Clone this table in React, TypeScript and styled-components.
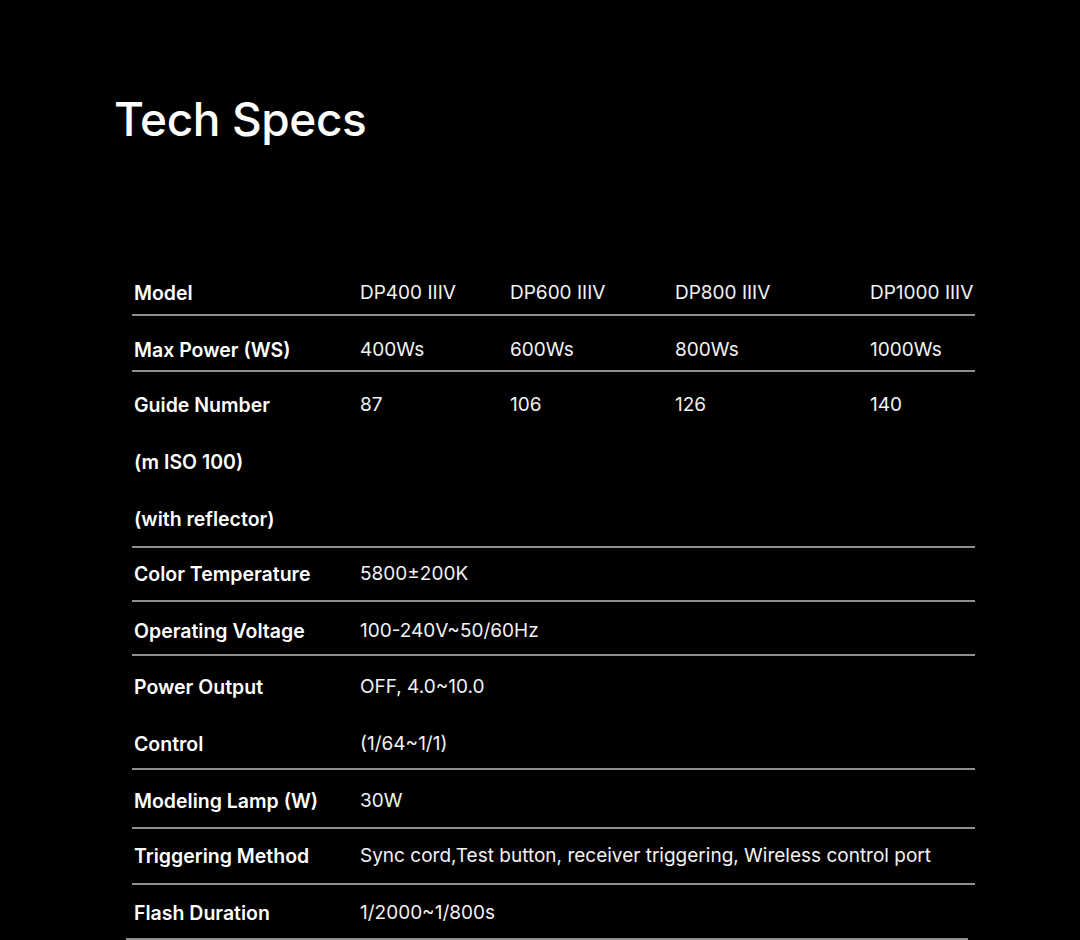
import React from 'react';
import { createGlobalStyle, styled } from 'styled-components';

const GlobalStyle = createGlobalStyle`
	html, body {
		margin: 0;
		padding: 0;
		background: #000;
	}
	body {
		font-family: Inter, 'Noto Sans', sans-serif;
		color: #fff;
	}
`;

type Row = {
	label: string[];
	values: string[][];
	pt: number;
	pb: number;
	span?: boolean;
};

const rows: Row[] = [
	{ label: ['Model'], values: [['DP400 IIIV'], ['DP600 IIIV'], ['DP800 IIIV'], ['DP1000 IIIV']], pt: 15, pb: 7 },
	{ label: ['Max Power (WS)'], values: [['400Ws'], ['600Ws'], ['800Ws'], ['1000Ws']], pt: 20, pb: 6 },
	{ label: ['Guide Number', '(m ISO 100)', '(with reflector)'], values: [['87'], ['106'], ['126'], ['140']], pt: 19, pb: 13 },
	{ label: ['Color Temperature'], values: [['5800±200K']], pt: 12, pb: 12, span: true },
	{ label: ['Operating Voltage'], values: [['100-240V~50/60Hz']], pt: 15, pb: 9, span: true },
	{ label: ['Power Output', 'Control'], values: [['OFF, 4.0~10.0', '(1/64~1/1)']], pt: 17, pb: 10, span: true },
	{ label: ['Modeling Lamp (W)'], values: [['30W']], pt: 17, pb: 12, span: true },
	{
		label: ['Triggering Method'],
		values: [['Sync cord,Test button, receiver triggering, Wireless control port']],
		pt: 13,
		pb: 13,
		span: true,
	},
	{ label: ['Flash Duration'], values: [['1/2000~1/800s']], pt: 14, pb: 11, span: true },
];

const App: React.FunctionComponent = () => {
	return (
		<Page>
			<GlobalStyle />
			<Title>Tech Specs</Title>
			<Table>
				{rows.map((row, i) => (
					<SpecRow key={row.label[0]} $pt={row.pt} $pb={row.pb} $last={i === rows.length - 1}>
						<Label>
							{row.label.map((l) => (
								<Line key={l}>{l}</Line>
							))}
						</Label>
						{row.values.map((v, j) => (
							<Value key={j} $span={row.span}>
								{v.map((t) => (
									<Line key={t}>{t}</Line>
								))}
							</Value>
						))}
					</SpecRow>
				))}
			</Table>
		</Page>
	);
};

const Page = styled.div`
	width: 1080px;
	height: 940px;
	overflow: hidden;
	padding-top: 91px;
	box-sizing: border-box;
`;
const Title = styled.h1`
	margin: 0 0 0 114px;
	font-size: 46px;
	line-height: 56px;
	font-weight: 500;
	letter-spacing: -0.4px;
	color: #fff;
`;
const Table = styled.div`
	margin: 117px 0 0 132px;
	width: 843px;
`;
const SpecRow = styled.div<{ $pt: number; $pb: number; $last: boolean }>`
	display: grid;
	grid-template-columns: 228px 150px 165px 195px 105px;
	padding: ${(p) => p.$pt}px 0 ${(p) => p.$pb}px;
	border-bottom: 2px solid #8e8e8e;
	${(p) => (p.$last ? 'box-sizing: border-box; margin-left: -6px; padding-left: 6px; width: 842px;' : '')}
`;
const Cell = styled.div`
	display: flex;
	flex-direction: column;
	gap: 29px;
	white-space: nowrap;
`;
const Label = styled(Cell)`
	font-size: 19.5px;
	font-weight: 600;
	padding-left: 2px;
	color: #fff;
`;
const Value = styled(Cell)<{ $span?: boolean }>`
	font-size: 19px;
	font-weight: 400;
	color: #f2f2f2;
	${(p) => (p.$span ? 'grid-column: 2 / -1;' : '')}
`;
const Line = styled.span`
	line-height: 28px;
`;

export default App;
